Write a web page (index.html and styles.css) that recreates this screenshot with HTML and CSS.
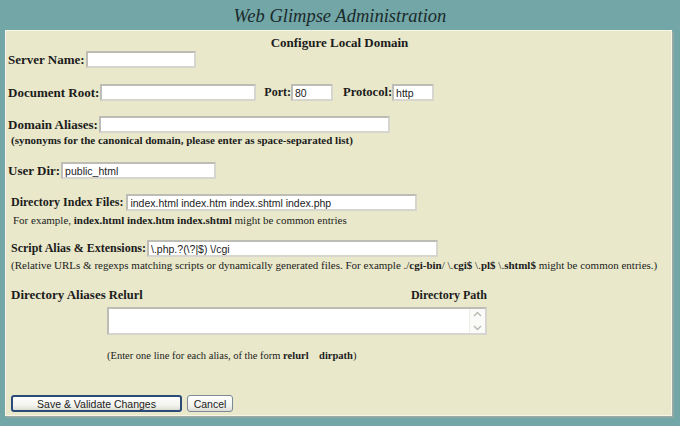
FILE: index.html
```html
<!DOCTYPE html>
<html>
<head>
<meta charset="utf-8">
<link rel="stylesheet" href="styles.css">
</head>
<body>
<h1 class="title">Web Glimpse Administration</h1>
<div class="panel">
  <div class="heading">Configure Local Domain</div>

  <div class="row r-server">
    <span class="lbl">Server Name:</span>
    <input class="inp w-server" type="text" value="">
  </div>

  <div class="row r-doc">
    <span class="lbl">Document Root:</span>
    <input class="inp w-doc" type="text" value="">
    <span class="lbl lbl-port">Port:</span>
    <input class="inp w-small" type="text" value="80">
    <span class="lbl lbl-proto">Protocol:</span>
    <input class="inp w-small" type="text" value="http">
  </div>

  <div class="row r-domain">
    <span class="lbl">Domain Aliases:</span>
    <input class="inp w-long" type="text" value="">
  </div>
  <div class="note-bold">(synonyms for the canonical domain, please enter as space-separated list)</div>

  <div class="row r-user">
    <span class="lbl">User Dir:</span>
    <input class="inp w-user" type="text" value="public_html">
  </div>

  <div class="row r-index">
    <span class="lbl lbl-sm">Directory Index Files:</span>
    <input class="inp w-long" type="text" value="index.html index.htm index.shtml index.php">
  </div>
  <div class="note note-ex">For example, <b>index.html index.htm index.shtml</b> might be common entries</div>

  <div class="row r-script">
    <span class="lbl lbl-sm">Script Alias &amp; Extensions:</span>
    <input class="inp w-long" type="text" value="\.php.?(\?|$) \/cgi">
  </div>
  <div class="note note-rel">(Relative URLs &amp; regexps matching scripts or dynamically generated files. For example ./<b>cgi-bin</b>/ \.<b>cgi$</b> \.<b>pl$</b> \.<b>shtml$</b> might be common entries.)</div>

  <div class="alias-head">
    <span class="alias-lbl">Directory Aliases</span>
    <span class="relurl">Relurl</span>
    <span class="dirpath">Directory Path</span>
  </div>
  <div class="ta-wrap">
    <div class="ta">
      <textarea class="ta-field"></textarea>
      <div class="sbar">
        <svg class="arrow" width="9" height="6" viewBox="0 0 9 6"><path d="M1 5 L4.5 1.5 L8 5" fill="none" stroke="#b8b8b0" stroke-width="1.4"/></svg>
        <svg class="arrow" width="9" height="6" viewBox="0 0 9 6"><path d="M1 1 L4.5 4.5 L8 1" fill="none" stroke="#b8b8b0" stroke-width="1.4"/></svg>
      </div>
    </div>
  </div>
  <div class="note enter">(Enter one line for each alias, of the form <b>relurl</b> &nbsp;&nbsp; <b>dirpath</b>)</div>

  <div class="buttons">
    <button class="btn btn-default" type="button">Save &amp; Validate Changes</button>
    <button class="btn btn-cancel" type="button">Cancel</button>
  </div>
</div>
</body>
</html>
```

FILE: styles.css
```css
html, body {
  margin: 0;
  padding: 0;
}
body {
  background: #72a6a7;
  width: 680px;
  height: 426px;
  overflow: hidden;
  font-family: "Liberation Serif", "Times New Roman", serif;
  color: #1c1c1c;
}
.title {
  margin: 0;
  height: 30px;
  line-height: 32px;
  text-align: center;
  font-size: 18.5px;
  font-style: italic;
  font-weight: normal;
  color: #1b2b2b;
}
.panel {
  margin: 0 8px 0 5px;
  height: 386px;
  box-sizing: border-box;
  background: #e9e8ca;
  border: 1px solid #f6f5e6;
  box-shadow: 1px 1px 0 #9aa9a4, 2px 2px 0 #8fa7a5;
  padding: 4px 0 0 2px;
}
.heading {
  height: 16px;
  line-height: 16px;
  text-align: center;
  font-weight: bold;
  font-size: 13px;
}
.row {
  display: flex;
  align-items: center;
  height: 17px;
}
.r-doc, .r-user {
  margin-top: 16px;
}
.r-domain, .r-index { margin-top: 15px; }
.r-script { margin-top: 14px; }
.r-index, .r-script { padding-left: 3px; }
.lbl {
  font-weight: bold;
  font-size: 13px;
  margin-right: 1px;
}
.lbl-sm { font-size: 12px; margin-right: 3px; }
.r-script .lbl-sm { margin-right: 1px; }
.lbl-port { margin-left: 8px; font-size: 12px; margin-right: 0; }
.lbl-proto { margin-left: 10px; font-size: 12.5px; margin-right: 0; }
.inp {
  box-sizing: border-box;
  height: 17px;
  margin: 0;
  padding: 0 2px;
  border: 2px solid;
  border-color: #bdbdb5 #d6d6ce #d6d6ce #bdbdb5;
  background: #fff;
  font-family: "Liberation Sans", Arial, sans-serif;
  font-size: 10.5px;
  color: #222;
  outline: none;
}
.w-server { width: 110px; }
.w-doc { width: 156px; }
.w-small { width: 42px; }
.w-long { width: 291px; }
.w-user { width: 155px; }
.note-bold {
  margin-top: 1px;
  padding-left: 3px;
  height: 12px;
  line-height: 12px;
  font-size: 11px;
  font-weight: bold;
}
.note {
  height: 12px;
  line-height: 12px;
  font-size: 11px;
}
.note-ex { margin-top: 3px; padding-left: 5px; }
.note-rel { margin-top: 2px; padding-left: 3px; }
.alias-head {
  margin-top: 17px;
  height: 14px;
  line-height: 14px;
  display: flex;
  align-items: baseline;
  width: 479px;
  padding-left: 3px;
  box-sizing: border-box;
  font-size: 12px;
  font-weight: bold;
}
.alias-lbl { font-size: 13px; }
.relurl { margin-left: 3px; font-size: 12.5px; }
.dirpath { margin-left: auto; }
.ta-wrap {
  margin-top: 5px;
  padding-left: 99px;
}
.ta {
  display: flex;
  width: 380px;
  height: 28px;
  box-sizing: border-box;
  border: 2px solid;
  border-color: #bdbdb5 #d6d6ce #d6d6ce #bdbdb5;
  background: #fff;
}
.ta-field {
  flex: 1;
  border: none;
  margin: 0;
  padding: 0;
  resize: none;
  outline: none;
  background: #fff;
}
.sbar {
  width: 15px;
  display: flex;
  flex-direction: column;
  justify-content: space-between;
  align-items: center;
  padding: 2px 0;
  background: #fafaf8;
  border-left: 1px solid #eeeee8;
}
.enter {
  margin-top: 15px;
  padding-left: 99px;
  font-size: 10.5px;
}
.buttons {
  margin-top: 33px;
  padding-left: 3px;
  display: flex;
  gap: 5px;
}
.btn {
  height: 17px;
  margin: 0;
  padding: 0;
  box-sizing: border-box;
  border-radius: 3px;
  background: linear-gradient(#ffffff, #f1f1ec 70%, #dcdcd4);
  font-family: "Liberation Sans", Tahoma, sans-serif;
  font-size: 10.5px;
  color: #222;
}
.btn-default {
  width: 171px;
  border: 2px solid #2a4a78;
}
.btn-cancel {
  width: 46px;
  border: 1px solid #7c8a98;
}
```
